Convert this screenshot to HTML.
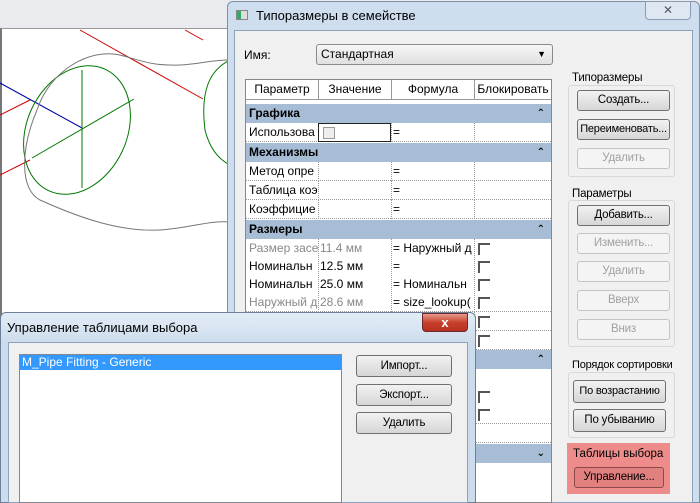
<!DOCTYPE html>
<html><head><meta charset="utf-8"><style>
*{margin:0;padding:0;box-sizing:border-box}
body{width:700px;height:503px;position:relative;overflow:hidden;background:#e9ebee;font-family:"Liberation Sans","DejaVu Sans",sans-serif;font-size:12px;color:#000}
.a{position:absolute}
.btn{position:absolute;border:1px solid #707070;border-radius:3px;background:linear-gradient(#f2f2f2,#e4e4e4 50%,#d6d6d6);text-align:center;font-size:11.5px;line-height:18px;white-space:nowrap;letter-spacing:-0.2px}
.dis{border-color:#c4c4c4;background:#f4f4f4;color:#a0a0a0}
.grp{position:absolute;border:1px solid #d8d8d8;border-radius:3px}
.lbl{position:absolute;background:#f0f0f0;padding:0 1px;font-size:11.5px;white-space:nowrap;letter-spacing:-0.2px}
.row{position:absolute;left:246px;width:305px;height:19px;border-bottom:1px dotted #999;background:#fff;font-size:12px;line-height:18px}
.row span{position:absolute;top:0;white-space:nowrap;overflow:hidden}
.hd{position:absolute;left:246px;width:305px;height:19px;background:#a7bdd6;font-weight:bold;font-size:12px;line-height:19px;padding-left:3px}
.hd i{position:absolute;right:6px;font-style:normal;font-size:10px}
.vl{position:absolute;top:0;height:19px;border-left:1px dotted #999}
.cb{position:absolute;left:478px;width:12px;height:12px;border-left:2px solid #555;border-top:2px solid #555;top:4px}
</style></head><body>
<div class="a" style="left:0;top:28px;width:230px;height:290px;background:#fff;border-left:2px solid #777;border-top:1px solid #999"></div>
<svg class="a" style="left:0;top:0" width="230" height="320">
<path d="M80 30 L203 99" stroke="#c00" fill="none"/>
<path d="M185 30 L203 40" stroke="#c00" fill="none"/>
<path d="M0 115 L30 100" stroke="#c00" fill="none"/>
<path d="M0 175 L30 160" stroke="#c00" fill="none"/>
<path d="M0 83 L82 128" stroke="#00a" fill="none"/>
<ellipse cx="77" cy="130" rx="50" ry="67" transform="rotate(25 77 130)" stroke="#070" fill="none"/>
<path d="M82 70 L82 188 M32 158 L134 99" stroke="#070" fill="none"/>
<path d="M37 110 C50 70 90 48 120 55 C140 60 150 66 180 65 C200 64 210 60 230 60" stroke="#777" fill="none"/>
<path d="M37 110 C20 150 20 190 40 200 C80 218 120 232 160 230 C190 228 210 220 230 222" stroke="#777" fill="none"/>
<path d="M230 60 C210 70 200 90 205 130 C210 150 220 160 230 165" stroke="#070" fill="none"/>
</svg>
<div class="a" style="left:227px;top:1px;width:473px;height:502px;background:#cfdeee;border:1px solid #7a8fa8;border-radius:6px 6px 0 0"></div>
<div class="a" style="left:236px;top:10px;width:12px;height:10px;background:linear-gradient(90deg,#3a6 40%,#ddd 40%);border:1px solid #888"></div>
<div class="a" style="left:256px;top:8px;font-size:13px">Типоразмеры в семействе</div>
<div class="a" style="left:645px;top:1px;width:46px;height:19px;border:1px solid #8a9bb0;border-radius:0 0 4px 4px;background:#dfe8f2;text-align:center;color:#556;font-size:12px;line-height:17px">✕</div>
<div class="a" style="left:234px;top:30px;width:459px;height:473px;background:#f0f0f0;border:1px solid #8ea3bb"></div>
<div class="a" style="left:244px;top:48px">Имя:</div>
<div class="a" style="left:316px;top:44px;width:237px;height:21px;border:1px solid #8a8a8a;border-radius:3px;background:linear-gradient(#f6f6f6,#e0e0e0);padding-left:4px;line-height:19px">Стандартная<span style="position:absolute;right:6px;font-size:9px">▼</span></div>
<div class="a" style="left:245px;top:79px;width:307px;height:424px;background:#fff;border:1px solid #888"></div>
<div class="a" style="left:246px;top:80px;width:305px;height:20px;background:#fff;border-bottom:1px solid #999;line-height:19px">
<span class="a" style="left:0;width:72px;text-align:center">Параметр</span>
<span class="a" style="left:72px;width:73px;text-align:center;border-left:1px solid #999">Значение</span>
<span class="a" style="left:145px;width:83px;text-align:center;border-left:1px solid #999">Формула</span>
<span class="a" style="left:228px;width:77px;text-align:center;border-left:1px solid #999">Блокировать</span></div>
<div class="hd" style="top:104px">Графика<i>⌃</i></div>
<div class="row" style="top:123px"><span style="left:3px">Использова</span><div class="a" style="left:72px;top:0;width:73px;height:19px;border:1px solid #222;background:#fff"><div class="a" style="left:4px;top:3px;width:12px;height:12px;border:1px solid #999;background:#eee"></div></div><div class="vl" style="left:145px"></div><span style="left:147px">=</span><div class="vl" style="left:228px"></div></div>
<div class="hd" style="top:143px">Механизмы<i>⌃</i></div>
<div class="row" style="top:162px"><span style="left:3px">Метод опре</span><div class="vl" style="left:72px"></div><div class="vl" style="left:145px"></div><span style="left:147px">=</span><div class="vl" style="left:228px"></div></div>
<div class="row" style="top:181px"><span style="left:3px">Таблица коэ</span><div class="vl" style="left:72px"></div><div class="vl" style="left:145px"></div><span style="left:147px">=</span><div class="vl" style="left:228px"></div></div>
<div class="row" style="top:200px"><span style="left:3px">Коэффицие</span><div class="vl" style="left:72px"></div><div class="vl" style="left:145px"></div><span style="left:147px">=</span><div class="vl" style="left:228px"></div></div>
<div class="hd" style="top:220px">Размеры<i>⌃</i></div>
<div class="row" style="top:239px;color:#888"><span style="left:3px;width:69px">Размер засе</span><div class="vl" style="left:72px"></div><span style="left:74px">11.4 мм</span><div class="vl" style="left:145px"></div><span style="left:147px;color:#000;width:80px">= Наружный д</span><div class="vl" style="left:228px"></div><div class="cb" style="left:232px"></div></div>
<div class="row" style="top:257px"><span style="left:3px;width:69px">Номинальн</span><div class="vl" style="left:72px"></div><span style="left:74px">12.5 мм</span><div class="vl" style="left:145px"></div><span style="left:147px">=</span><div class="vl" style="left:228px"></div><div class="cb" style="left:232px"></div></div>
<div class="row" style="top:275px"><span style="left:3px;width:69px">Номинальн</span><div class="vl" style="left:72px"></div><span style="left:74px">25.0 мм</span><div class="vl" style="left:145px"></div><span style="left:147px;width:80px">= Номинальн</span><div class="vl" style="left:228px"></div><div class="cb" style="left:232px"></div></div>
<div class="row" style="top:293px;color:#888"><span style="left:3px;width:69px">Наружный д</span><div class="vl" style="left:72px"></div><span style="left:74px">28.6 мм</span><div class="vl" style="left:145px"></div><span style="left:147px;color:#000;width:80px">= size_lookup(</span><div class="vl" style="left:228px"></div><div class="cb" style="left:232px"></div></div>
<div class="row" style="top:312px"><div class="vl" style="left:228px"></div><div class="cb" style="left:232px"></div></div>
<div class="row" style="top:331px"><div class="vl" style="left:228px"></div><div class="cb" style="left:232px"></div></div>
<div class="hd" style="top:350px">&nbsp;<i>⌃</i></div>
<div class="row" style="top:369px"><div class="vl" style="left:228px"></div></div>
<div class="row" style="top:387px"><div class="vl" style="left:228px"></div><div class="cb" style="left:232px"></div></div>
<div class="row" style="top:405px"><div class="vl" style="left:228px"></div><div class="cb" style="left:232px"></div></div>
<div class="row" style="top:424px"><div class="vl" style="left:228px"></div></div>
<div class="hd" style="top:444px">&nbsp;<i>⌄</i></div>
<div class="grp" style="left:568px;top:85px;width:107px;height:92px"></div>
<div class="lbl" style="left:571px;top:72px">Типоразмеры</div>
<div class="btn" style="left:577px;top:90px;width:93px;height:21px">Создать...</div>
<div class="btn" style="left:577px;top:119px;width:93px;height:21px;font-size:11px">Переименовать...</div>
<div class="btn dis" style="left:577px;top:148px;width:93px;height:21px">Удалить</div>
<div class="grp" style="left:568px;top:200px;width:107px;height:147px"></div>
<div class="lbl" style="left:571px;top:188px">Параметры</div>
<div class="btn" style="left:577px;top:205px;width:93px;height:21px">Добавить...</div>
<div class="btn dis" style="left:577px;top:233px;width:93px;height:21px">Изменить...</div>
<div class="btn dis" style="left:577px;top:261px;width:93px;height:21px">Удалить</div>
<div class="btn dis" style="left:577px;top:290px;width:93px;height:21px">Вверх</div>
<div class="btn dis" style="left:577px;top:319px;width:93px;height:21px">Вниз</div>
<div class="grp" style="left:568px;top:372px;width:107px;height:66px"></div>
<div class="lbl" style="left:571px;top:359px;font-size:11px">Порядок сортировки</div>
<div class="btn" style="left:573px;top:380px;width:93px;height:23px;line-height:21px;font-size:11px">По возрастанию</div>
<div class="btn" style="left:573px;top:409px;width:93px;height:23px;line-height:21px">По убыванию</div>
<div class="a" style="left:567px;top:443px;width:103px;height:51px;background:#ee8c8c"></div>
<div class="a" style="left:573px;top:448px;font-size:11.5px">Таблицы выбора</div>
<div class="btn" style="left:574px;top:467px;width:90px;height:21px;background:#e28080;border-color:#8a4a4a">Управление...</div>
<div class="a" style="left:0;top:312px;width:476px;height:191px;background:linear-gradient(#e4edf7,#cddcec 30px);border:1px solid #6d7f96;border-radius:6px 6px 0 0"></div>
<div class="a" style="left:7px;top:320px;font-size:13px">Управление таблицами выбора</div>
<div class="a" style="left:422px;top:313px;width:46px;height:19px;border:1px solid #6a2a2a;border-radius:0 0 4px 4px;background:linear-gradient(#e89a8a,#c8402c 50%,#b83020);color:#fff;font-weight:bold;text-align:center;line-height:17px;font-size:13px">x</div>
<div class="a" style="left:8px;top:342px;width:460px;height:161px;background:#f0f0f0;border:1px solid #8ea3bb"></div>
<div class="a" style="left:19px;top:354px;width:323px;height:149px;background:#fff;border:1px solid #828790"></div>
<div class="a" style="left:20px;top:355px;width:321px;height:15px;background:#3399ff;color:#fff;line-height:15px;padding-left:2px">M_Pipe Fitting - Generic</div>
<div class="btn" style="left:356px;top:355px;width:96px;height:22px;line-height:20px">Импорт...</div>
<div class="btn" style="left:356px;top:384px;width:96px;height:22px;line-height:20px">Экспорт...</div>
<div class="btn" style="left:356px;top:412px;width:96px;height:22px;line-height:20px">Удалить</div>
</body></html>
